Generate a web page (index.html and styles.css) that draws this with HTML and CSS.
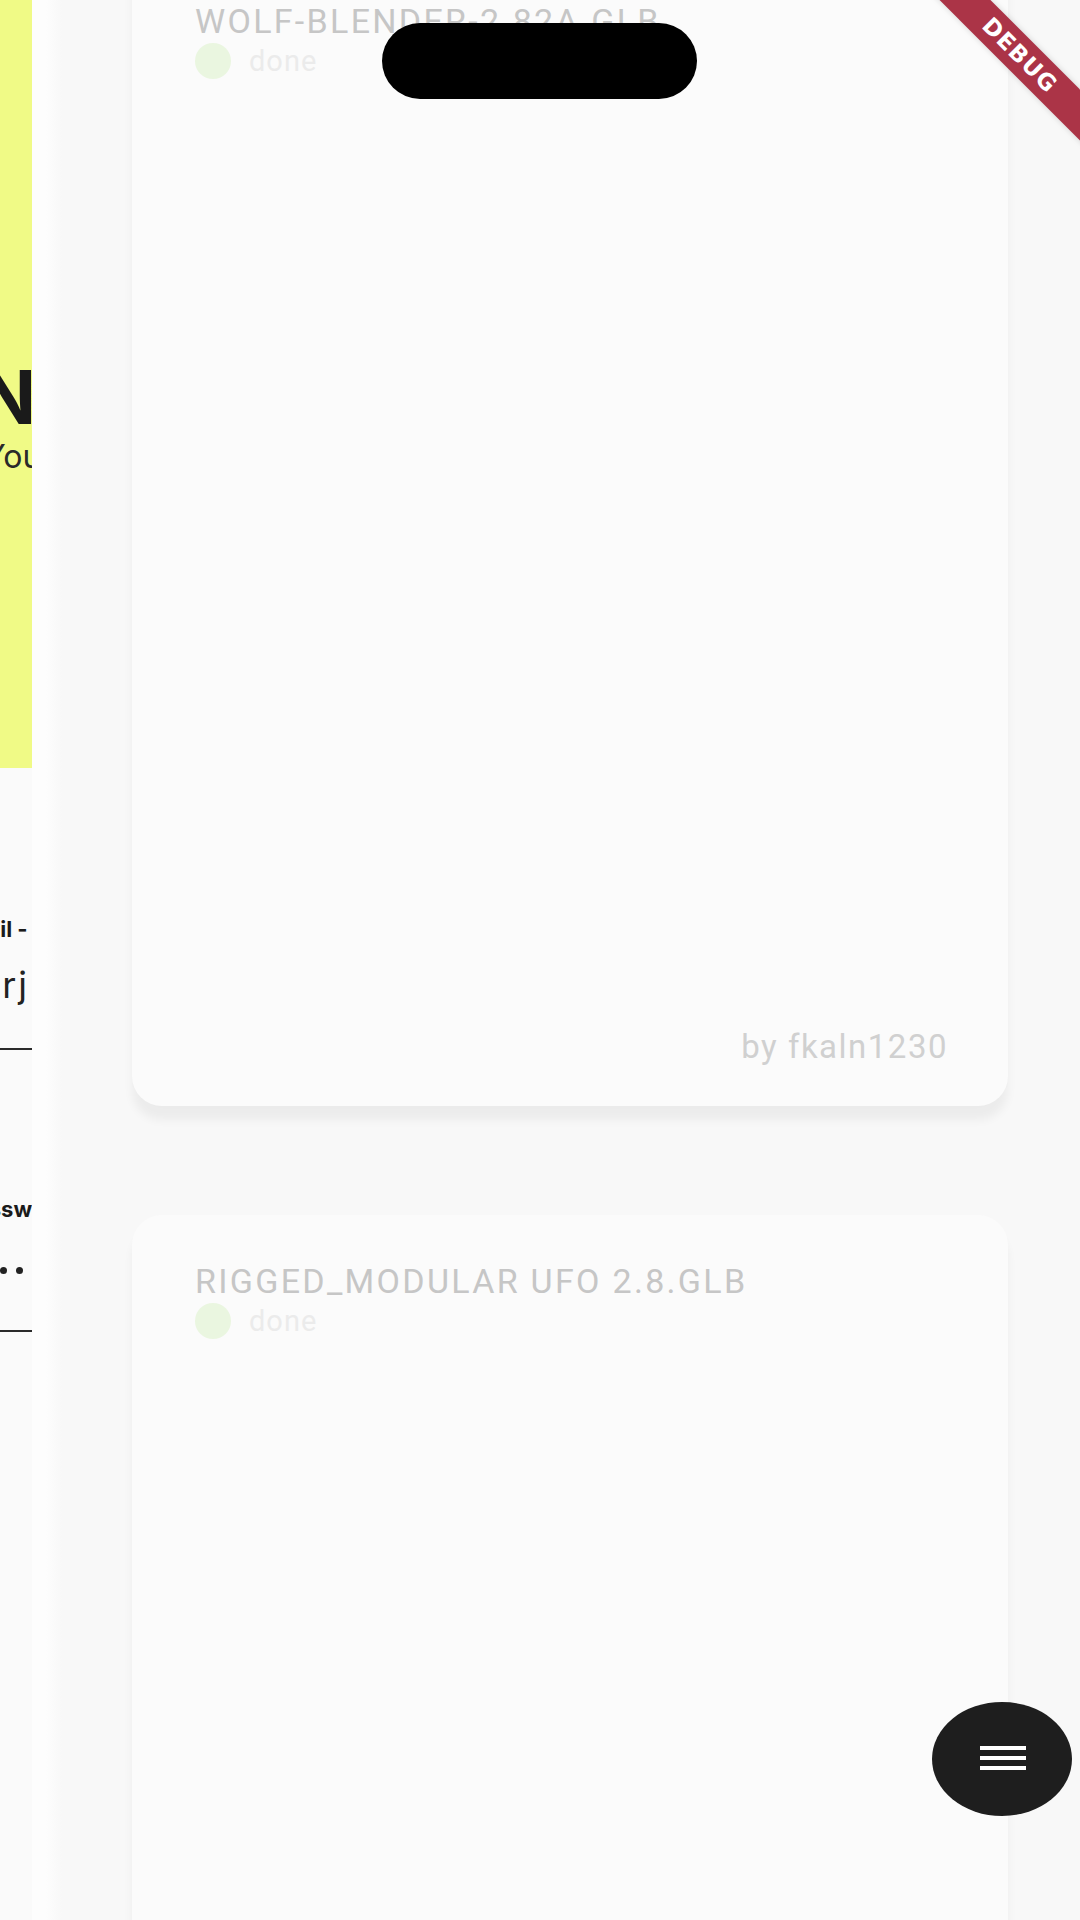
FILE: index.html
```html
<!DOCTYPE html>
<html lang="en">
<head>
<meta charset="utf-8">
<title>Models</title>
<link rel="stylesheet" href="styles.css">
</head>
<body>
<div class="screen">
  <section class="login">
    <div class="login-inner">
      <header class="login-hero">
        <h1 class="login-title">LOGIN</h1>
        <p class="login-sub">Your email and password</p>
      </header>
      <div class="field field-email">
        <label class="field-label">Email -</label>
        <div class="field-value">fkaln1230 rj</div>
        <div class="field-line"></div>
      </div>
      <div class="field field-pass">
        <label class="field-label">Password</label>
        <div class="field-dots" aria-label="password">
          <span class="pw-dot"></span><span class="pw-dot"></span><span class="pw-dot"></span><span class="pw-dot"></span><span class="pw-dot"></span><span class="pw-dot"></span>
        </div>
        <div class="field-line"></div>
      </div>
    </div>
  </section>

  <main class="gallery">
    <article class="card card-first">
      <h2 class="card-title">WOLF-BLENDER-2.82A.GLB</h2>
      <div class="status"><span class="status-dot"></span><span class="status-text">done</span></div>
      <div class="card-body"></div>
      <div class="card-author">by fkaln1230</div>
    </article>
    <article class="card card-second">
      <h2 class="card-title">RIGGED_MODULAR UFO 2.8.GLB</h2>
      <div class="status"><span class="status-dot"></span><span class="status-text">done</span></div>
    </article>
  </main>

  <div class="camera-pill"></div>
  <div class="debug-banner">DEBUG</div>
  <button class="fab" aria-label="menu">
    <svg width="46" height="26" viewBox="0 0 46 26">
      <rect x="0" y="0" width="46" height="4" fill="#ffffff"/>
      <rect x="0" y="10" width="46" height="4" fill="#ffffff"/>
      <rect x="0" y="20" width="46" height="4" fill="#ffffff"/>
    </svg>
  </button>
</div>
</body>
</html>
```

FILE: styles.css
```css
html, body {
  margin: 0;
  padding: 0;
  background: #f7f7f7;
}

.screen {
  position: relative;
  width: 1080px;
  height: 1920px;
  overflow: hidden;
  display: flex;
  flex-direction: row;
  background: #f7f7f7;
  font-family: Roboto, "Liberation Sans", sans-serif;
}

/* ---------- login panel sliding out ---------- */
.login {
  width: 32px;
  flex: 0 0 32px;
  overflow: hidden;
  background: #fafafa;
}

.login-inner {
  width: 400px;
  margin-left: -368px;
  font-family: Inter, "Liberation Sans", sans-serif;
  color: #1c1c1c;
}

.login-hero {
  height: 768px;
  box-sizing: border-box;
  padding-top: 357px;
  background: #f0fa86;
}

.login-title {
  margin: 0 -4px 0 0;
  font-size: 74px;
  line-height: 80px;
  font-weight: 700;
  text-align: right;
  color: #1a1a1a;
}

.login-sub {
  margin: 0;
  padding-left: 352px;
  font-size: 32px;
  line-height: 40px;
  white-space: nowrap;
  color: #2a2a2a;
}

.field-email {
  margin-top: 147px;
}

.field-pass {
  margin-top: 145px;
}

.field-label {
  display: block;
  font-size: 22px;
  line-height: 28px;
  font-weight: 700;
  white-space: nowrap;
  color: #1a1a1a;
}

.field-email .field-label {
  padding-left: 322px;
}

.field-pass .field-label {
  padding-left: 330px;
}

.field-value {
  margin-top: 21px;
  padding-right: 3px;
  font-size: 36px;
  line-height: 42px;
  letter-spacing: 2px;
  text-align: right;
  white-space: nowrap;
  color: #222222;
}

.field-dots {
  display: flex;
  justify-content: flex-end;
  align-items: center;
  gap: 9px;
  height: 36px;
  margin-top: 29px;
  padding-right: 9px;
}

.pw-dot {
  width: 7px;
  height: 7px;
  border-radius: 50%;
  background: #222222;
}

.field-line {
  height: 2px;
  background: #2a2a2a;
}

.field-email .field-line {
  margin-top: 42px;
}

.field-pass .field-line {
  margin-top: 42px;
}

/* ---------- gallery ---------- */
.gallery {
  flex: 1 1 auto;
  display: flex;
  flex-direction: column;
  padding-left: 100px;
  padding-right: 72px;
  background: linear-gradient(to right, #fdfdfd 0, #fdfdfd 14px, #f8f8f8 30px, #f8f8f8 100%);
}

.card {
  display: flex;
  flex-direction: column;
  box-sizing: border-box;
  padding: 48px 60px 41px 63px;
  border-radius: 30px;
  background: #fbfbfb;
  box-shadow: 0 14px 10px rgba(0, 0, 0, 0.05);
  flex: 0 0 auto;
}

.card-first {
  margin-top: -45px;
  height: 1151px;
}

.card-second {
  margin-top: 109px;
  height: 900px;
}

.card-title {
  margin: 0;
  font-size: 34px;
  line-height: 36px;
  font-weight: 400;
  letter-spacing: 2.3px;
  color: #c6c6c6;
  white-space: nowrap;
}

.status {
  display: flex;
  align-items: center;
  gap: 18px;
  margin-top: 4px;
}

.status-dot {
  width: 36px;
  height: 36px;
  border-radius: 50%;
  background: #eaf6e0;
}

.status-text {
  font-size: 29px;
  line-height: 34px;
  letter-spacing: 1px;
  color: #ebebeb;
}

.card-body {
  flex: 1 1 auto;
}

.card-author {
  align-self: flex-end;
  font-size: 33px;
  line-height: 36px;
  letter-spacing: 1.5px;
  color: #d0d0d0;
}

/* ---------- overlays ---------- */
.camera-pill {
  position: absolute;
  left: 382px;
  top: 23px;
  width: 315px;
  height: 76px;
  border-radius: 38px;
  background: #000000;
}

.debug-banner {
  position: absolute;
  left: 870px;
  top: 37px;
  width: 300px;
  height: 36px;
  transform: rotate(45deg);
  background: #ab3447;
  color: #ffffff;
  font-family: "DejaVu Sans", "Liberation Sans", sans-serif;
  font-weight: 700;
  font-size: 23px;
  line-height: 36px;
  letter-spacing: 1px;
  text-align: center;
  box-shadow: 0 0 6px rgba(0, 0, 0, 0.15);
}

.fab {
  position: absolute;
  left: 932px;
  top: 1702px;
  width: 140px;
  height: 114px;
  padding: 0;
  border: none;
  border-radius: 50%;
  background: #1e1e1e;
  display: flex;
  align-items: center;
  justify-content: center;
}

.fab svg {
  display: block;
  margin-left: 2px;
}
```
